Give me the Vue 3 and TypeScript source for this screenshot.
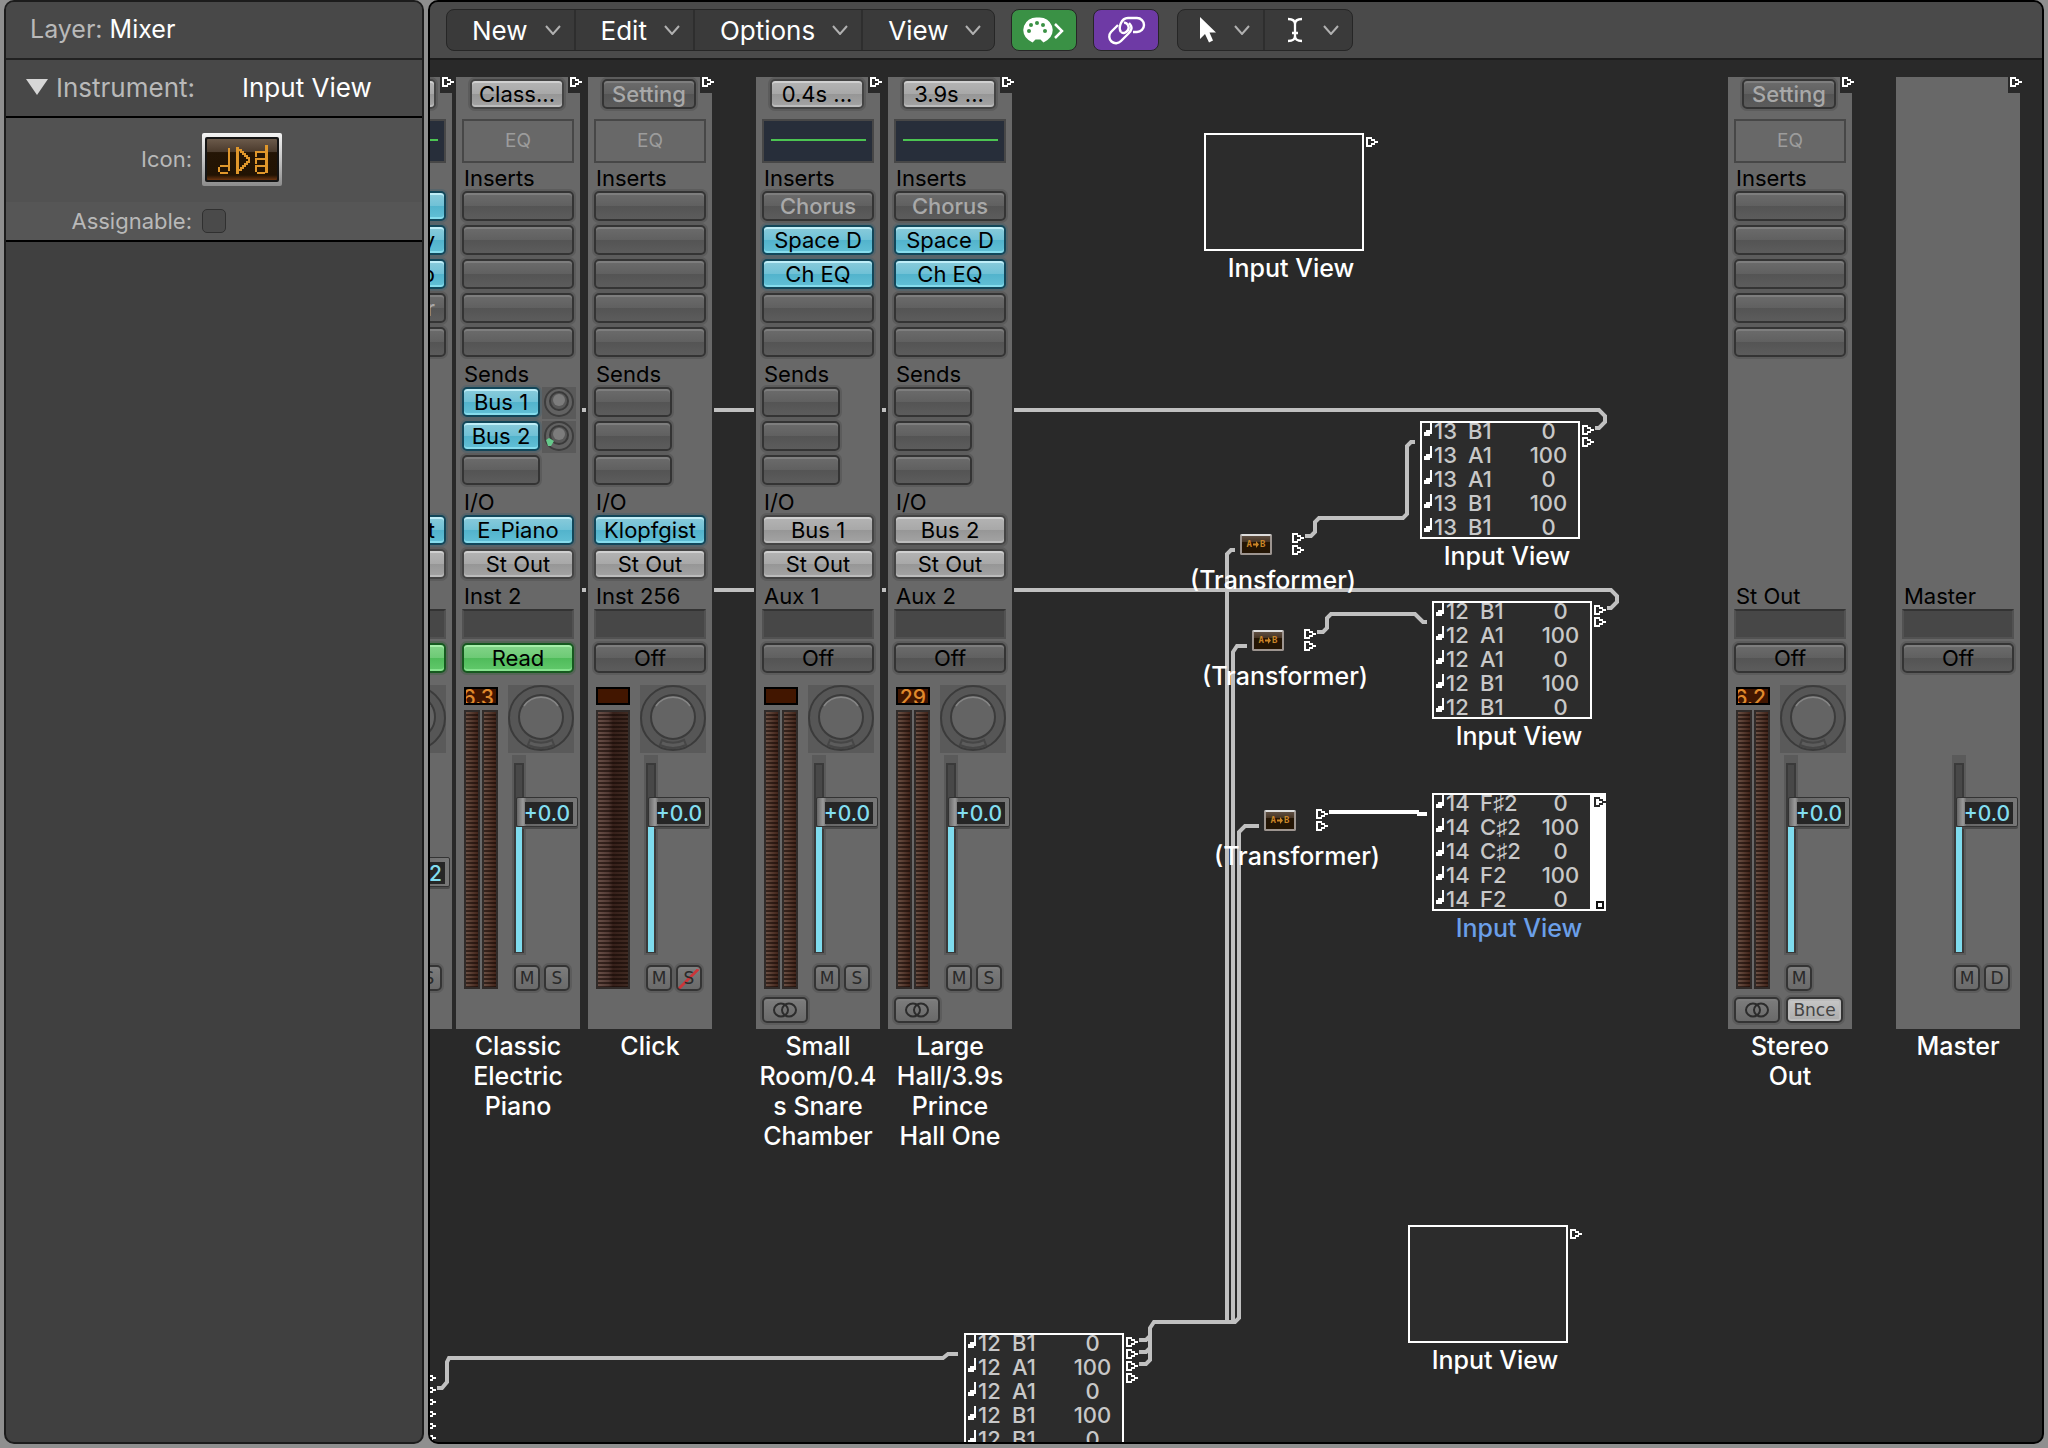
<script setup lang="ts">
import { ref } from 'vue'

type Tone = 'dark' | 'blue' | 'grey' | 'green'
interface Slot { text?: string; tone?: Tone; dim?: boolean }
interface Send { text?: string; tone?: Tone; knob?: 'off' | 'low' }
interface Strip {
  x: number
  label: string[]
  edge?: boolean
  setting?: Slot
  eq?: 'empty' | 'curve'
  inserts?: Slot[]
  sends?: Send[]
  io?: Slot[]
  channel?: string
  headings?: boolean
  mode: Slot
  peak?: string
  meter?: 1 | 2
  pan?: boolean
  level: string
  drop?: number
  keys: string[]
  soloSafe?: boolean
  link?: boolean
  bounce?: boolean
}
interface View { x: number; y: number; channel?: string; notes: [string, string][]; ports: number; selected?: boolean }

const assignable = ref(false)
const menus = ['New', 'Edit', 'Options', 'View']
const portShape = 'M0 0H6V2H9V4H12V6H9V8H6V10H0ZM2 2V8H5V6H8V4H5V2Z'

const five = (...s: Slot[]): Slot[] => [...s, ...Array.from({ length: 5 - s.length }, () => ({}))]
const room: Slot[] = five({ text: 'Chorus', dim: true }, { text: 'Space D', tone: 'blue' }, { text: 'Ch EQ', tone: 'blue' })

const strips: Strip[] = [
  {
    x: -102, label: [], edge: true, setting: { tone: 'grey' }, eq: 'curve',
    inserts: five({ tone: 'blue' }, { text: 'y', tone: 'blue' }, { text: 'p', tone: 'blue' }, { text: 'r', dim: true }),
    sends: [{}, {}, {}], io: [{ text: 't', tone: 'blue' }, { tone: 'grey' }],
    mode: { tone: 'green' }, meter: 2, pan: true, level: '2', drop: 60, keys: ['', 'S'],
  },
  {
    x: 26, label: ['Classic', 'Electric', 'Piano'], headings: true, setting: { text: 'Class...', tone: 'grey' }, eq: 'empty',
    inserts: five(), sends: [{ text: 'Bus 1', tone: 'blue', knob: 'off' }, { text: 'Bus 2', tone: 'blue', knob: 'low' }, {}],
    io: [{ text: 'E-Piano', tone: 'blue' }, { text: 'St Out', tone: 'grey' }], channel: 'Inst 2',
    mode: { text: 'Read', tone: 'green' }, peak: '6.3', meter: 2, pan: true, level: '+0.0', keys: ['M', 'S'],
  },
  {
    x: 158, label: ['Click'], headings: true, setting: { text: 'Setting', dim: true }, eq: 'empty',
    inserts: five(), sends: [{}, {}, {}],
    io: [{ text: 'Klopfgist', tone: 'blue' }, { text: 'St Out', tone: 'grey' }], channel: 'Inst 256',
    mode: { text: 'Off' }, peak: '', meter: 1, pan: true, level: '+0.0', keys: ['M', 'S'], soloSafe: true,
  },
  {
    x: 326, label: ['Small', 'Room/0.4', 's Snare', 'Chamber'], headings: true, setting: { text: '0.4s ...', tone: 'grey' }, eq: 'curve',
    inserts: room, sends: [{}, {}, {}],
    io: [{ text: 'Bus 1', tone: 'grey' }, { text: 'St Out', tone: 'grey' }], channel: 'Aux 1',
    mode: { text: 'Off' }, peak: '', meter: 2, pan: true, level: '+0.0', keys: ['M', 'S'], link: true,
  },
  {
    x: 458, label: ['Large', 'Hall/3.9s', 'Prince', 'Hall One'], headings: true, setting: { text: '3.9s ...', tone: 'grey' }, eq: 'curve',
    inserts: room, sends: [{}, {}, {}],
    io: [{ text: 'Bus 2', tone: 'grey' }, { text: 'St Out', tone: 'grey' }], channel: 'Aux 2',
    mode: { text: 'Off' }, peak: '29', meter: 2, pan: true, level: '+0.0', keys: ['M', 'S'], link: true,
  },
  {
    x: 1298, label: ['Stereo', 'Out'], headings: true, setting: { text: 'Setting', dim: true }, eq: 'empty',
    inserts: five(), channel: 'St Out',
    mode: { text: 'Off' }, peak: '6.2', meter: 2, pan: true, level: '+0.0', keys: ['M'], link: true, bounce: true,
  },
  { x: 1466, label: ['Master'], channel: 'Master', mode: { text: 'Off' }, level: '+0.0', keys: ['M', 'D'] },
]

const drums: [string, string][] = [['B1', '0'], ['A1', '100'], ['A1', '0'], ['B1', '100'], ['B1', '0']]
const views: View[] = [
  { x: 774, y: 73, notes: [], ports: 1 },
  { x: 990, y: 361, channel: '13', notes: drums, ports: 2 },
  { x: 1002, y: 541, channel: '12', notes: drums, ports: 2 },
  { x: 1002, y: 733, channel: '14', notes: [['F♯2', '0'], ['C♯2', '100'], ['C♯2', '0'], ['F2', '100'], ['F2', '0']], ports: 1, selected: true },
  { x: 978, y: 1165, notes: [], ports: 1 },
  { x: 534, y: 1273, channel: '12', notes: drums, ports: 4 },
]
const transformers = [{ x: 760, y: 473 }, { x: 772, y: 569 }, { x: 784, y: 749 }]

const cables = [
  'M150 350H1169L1175 356V362L1169 368H1165',
  'M150 530H1181L1187 536V542L1181 548H1177',
  'M875 476H881L885 472V462L889 458H973L977 454V386L981 382H985',
  'M887 572H893L897 568V558L901 554H985L993 562H997',
  'M805 490H801L797 494V1262',
  'M817 586H807L803 592V1262',
  'M829 766H815L809 772V1258L805 1262H724L720 1268V1300L716 1304H709M709 1280H716L720 1276M709 1292H716L720 1288',
  'M7 1328H12L17 1322V1302L19 1298H513L518 1294H528',
]
</script>

<template>
  <div class="app">
    <aside class="inspector">
      <header class="layer"><span class="muted">Layer:</span> Mixer</header>
      <div class="instrument">
        <svg class="disclosure" width="22" height="16" viewBox="0 0 22 16"><path d="M0 0H22L11 16Z" fill="#d6d6d6" /></svg>
        <span class="muted">Instrument:</span><span class="instrument-name">Input View</span>
      </div>
      <div class="field icon-field">
        <span class="field-label">Icon:</span>
        <button class="icon-well" aria-label="Choose icon">
          <svg width="80" height="53" viewBox="0 0 80 53">
            <defs>
              <linearGradient id="frame" x2="0" y2="1"><stop offset="0" stop-color="#f4f4f4" /><stop offset=".5" stop-color="#c4c4c4" /><stop offset="1" stop-color="#8c8c8c" /></linearGradient>
              <linearGradient id="glass" x2="0" y2="1"><stop offset="0" stop-color="#6b5a4b" /><stop offset=".32" stop-color="#4a3a2c" /><stop offset=".33" stop-color="#241505" /><stop offset=".88" stop-color="#221303" /><stop offset="1" stop-color="#6a3410" /></linearGradient>
            </defs>
            <rect width="80" height="53" rx="2" fill="url(#frame)" />
            <rect x="3" y="4" width="74" height="45" rx="2" fill="#141414" />
            <rect x="5" y="6" width="70" height="41" rx="1" fill="url(#glass)" />
            <g fill="none" stroke="#e0972b" stroke-width="2" shape-rendering="crispEdges">
              <path d="M27 15V38M18 33H26M17 34V39M18 40H26" stroke-width="2.4" />
              <path d="M35 14V41" stroke-width="3" />
              <path d="M37 17H39V19H41V21H43V23H45V25H47V29H45V31H43V33H41V35H39V37H37" />
              <path d="M64 12V40" stroke-width="3" />
              <path d="M63 19H54V24M63 26H54V31M63 33H54V39M55 40H63" />
            </g>
          </svg>
        </button>
      </div>
      <div class="field assign-field">
        <label class="field-label" for="assignable">Assignable:</label>
        <input id="assignable" v-model="assignable" type="checkbox" class="tick">
      </div>
    </aside>

    <main class="environment">
      <nav class="toolbar">
        <div class="group">
          <button v-for="m in menus" :key="m" class="menu">
            {{ m }}
            <svg width="16" height="10" viewBox="0 0 16 10"><path d="M1 1L8 9L15 1" class="chev" /></svg>
          </button>
        </div>
        <button class="toggle green" aria-label="MIDI In/Out">
          <svg width="64" height="40" viewBox="0 0 64 40">
            <path d="M24.500 7.500a13 12.500 0 0 0-8 22.500l4 2.500 3-3h5l3 3 4-2.500a13 12.500 0 0 0-8-22.500z" fill="#fff" />
            <g fill="#3a9145"><circle cx="17" cy="21" r="2" /><circle cx="19" cy="15" r="2" /><circle cx="25" cy="13" r="2" /><circle cx="31" cy="15" r="2" /><circle cx="33" cy="21" r="2" /></g>
            <path d="M43 14L50 21L43 28" fill="none" stroke="#fff" stroke-width="2.500" />
          </svg>
        </button>
        <button class="toggle purple" aria-label="Link">
          <svg width="64" height="40" viewBox="0 0 64 40" fill="none" stroke="#fff" stroke-width="2.400">
            <path d="M27 22C24 18 27 8 34 8H43A7 7 0 0 1 43 22H39" />
            <path d="M35 13C39 17 38 20 34 24L27 31A6.500 6.500 0 0 1 17 22L24 15" />
            <path d="M27 22C29 24 32 23 34 20C36 17 33 12 30 13" />
          </svg>
        </button>
        <div class="group tools">
          <button class="tool" aria-label="Pointer tool">
            <svg width="18" height="28" viewBox="0 0 18 28"><path d="M1 1V23L6 18L10 26.500L14 24.500L10.500 16.500H17Z" fill="#fff" /></svg>
            <svg width="16" height="10" viewBox="0 0 16 10"><path d="M1 1L8 9L15 1" class="chev" /></svg>
          </button>
          <button class="tool" aria-label="Text tool">
            <svg width="18" height="28" viewBox="0 0 18 28"><path d="M2 3C6 3 9 4 9 8V20C9 24 6 25 2 25M16 3C12 3 9 4 9 8M9 20C9 24 12 25 16 25M6 17H12" fill="none" stroke="#fff" stroke-width="2.300" /></svg>
            <svg width="16" height="10" viewBox="0 0 16 10"><path d="M1 1L8 9L15 1" class="chev" /></svg>
          </button>
        </div>
      </nav>

      <section class="canvas">
        <svg class="cables" width="100%" height="100%">
          <path v-for="c in cables" :key="c" :d="c" />
          <path class="live" d="M899 752H989M987 754H997" />
        </svg>

        <div v-for="s in strips" :key="s.x" class="object" :style="{ left: s.x + 'px', top: '17px' }">
          <article class="strip" :class="{ edge: s.edge }">
            <div class="notch">
              <svg class="port" width="12" height="11" viewBox="0 0 12 11"><path :d="portShape" /></svg>
            </div>
            <button v-if="s.setting" class="slot setting" :class="[s.setting.tone, { dim: s.setting.dim }]" aria-label="Setting">{{ s.setting.text }}</button>
            <button v-if="s.eq" class="eq" :class="s.eq" aria-label="EQ"><template v-if="s.eq === 'empty'">EQ</template></button>
            <template v-if="s.inserts">
              <h3 class="caption">{{ s.headings ? 'Inserts' : '' }}</h3>
              <div class="slots">
                <button v-for="(i, n) in s.inserts" :key="n" class="slot" :class="[i.tone, { dim: i.dim }]">{{ i.text }}</button>
              </div>
            </template>
            <template v-if="s.sends">
              <h3 class="caption spaced">{{ s.headings ? 'Sends' : '' }}</h3>
              <div class="slots">
                <div v-for="(d, n) in s.sends" :key="n" class="send">
                  <button class="slot" :class="d.tone">{{ d.text }}</button>
                  <svg v-if="d.knob" class="send-knob" width="34" height="32" viewBox="0 0 34 32">
                    <circle cx="17" cy="15" r="14" fill="#626262" stroke="#3d3d3d" stroke-width="2" />
                    <circle cx="17" cy="14" r="9" fill="#585858" stroke="#3a3a3a" stroke-width="2" />
                    <circle cx="17" cy="13" r="6" fill="#7c7c7c" />
                    <path v-if="d.knob === 'low'" d="M4 19L7 17L12 20L9 25L6 25Z" fill="#66c98b" />
                  </svg>
                </div>
              </div>
            </template>
            <template v-if="s.io">
              <h3 class="caption spaced">{{ s.headings ? 'I/O' : '' }}</h3>
              <div class="slots">
                <button v-for="(i, n) in s.io" :key="n" class="slot" :class="i.tone">{{ i.text }}</button>
              </div>
            </template>

            <div class="lower">
              <h3 class="caption spaced">{{ s.channel }}</h3>
              <div class="well"></div>
              <button class="slot" :class="s.mode.tone">{{ s.mode.text }}</button>
              <div class="mix">
                <div class="levels">
                  <template v-if="s.meter">
                    <div class="peak">{{ s.peak }}</div>
                    <div class="meters" :class="{ mono: s.meter === 1 }"><i v-for="b in s.meter" :key="b"></i></div>
                  </template>
                </div>
                <div class="controls">
                  <div class="pan">
                    <svg v-if="s.pan" width="66" height="68" viewBox="0 0 66 68">
                      <rect width="66" height="68" fill="#5a5a5a" />
                      <circle cx="33" cy="33" r="32" fill="#565656" stroke="#3b3b3b" stroke-width="2" />
                      <path d="M20 60A30 30 0 0 0 46 60L44 55A24 24 0 0 1 22 55Z" fill="#5c5c5c" stroke="#464646" stroke-width="2" />
                      <circle cx="33" cy="32" r="22" fill="#646464" stroke="#3b3b3b" stroke-width="2" />
                      <path d="M16 21A21 21 0 0 1 50 21" fill="none" stroke="#858585" stroke-width="1.500" />
                    </svg>
                  </div>
                  <div class="fader">
                    <div class="track"></div>
                    <div class="thumb-row" :style="{ paddingTop: 42 + (s.drop ?? 0) + 'px' }">
                      <div class="thumb"><output>{{ s.level }}</output></div>
                      <div class="fill"></div>
                    </div>
                    <input type="range" class="range" aria-label="Volume" min="-96" max="6" value="0">
                  </div>
                  <div class="keys">
                    <button v-for="(k, n) in s.keys" :key="n" class="slot key" :class="{ safe: s.soloSafe && k === 'S' }">{{ k }}</button>
                  </div>
                </div>
              </div>
              <div class="foot">
                <button v-if="s.link" class="slot key link" aria-label="Stereo">
                  <svg width="24" height="16" viewBox="0 0 24 16" fill="none" stroke="#2c2c2c" stroke-width="2"><ellipse cx="8" cy="8" rx="7" ry="6.500" /><ellipse cx="16" cy="8" rx="7" ry="6.500" /></svg>
                </button>
                <button v-if="s.bounce" class="slot key bounce">Bnce</button>
              </div>
            </div>
          </article>
          <p v-if="s.label.length" class="object-name"><span v-for="l in s.label" :key="l">{{ l }}</span></p>
        </div>

        <div v-for="t in transformers" :key="t.y" class="object transformer" :style="{ left: t.x + 'px', top: t.y + 'px' }">
          <div class="transformer-body">
            <div class="chip">
              <span>A</span><svg width="6" height="7" viewBox="0 0 6 7"><path d="M0 2.500H3V0L6 3.500L3 7V4.500H0Z" fill="#c98426" /></svg><span>B</span>
            </div>
            <div class="ports">
              <svg v-for="p in 2" :key="p" class="port" width="12" height="11" viewBox="0 0 12 11"><path :d="portShape" /></svg>
            </div>
          </div>
          <p class="object-name">(Transformer)</p>
        </div>

        <div v-for="(v, i) in views" :key="i" class="object view" :class="{ selected: v.selected }" :style="{ left: v.x + 'px', top: v.y + 'px' }">
          <div class="view-body">
            <div class="monitor">
              <table v-if="v.notes.length" aria-label="Incoming events">
                <tbody>
                  <tr v-for="(n, r) in v.notes" :key="r">
                    <td class="glyph"><svg width="8" height="14" viewBox="0 0 8 14" fill="#fff" shape-rendering="crispEdges"><path d="M6 0H8V12H6V14H0V10H2V8H6Z" /></svg></td>
                    <td class="chan">{{ v.channel }}</td>
                    <td class="pitch">{{ n[0] }}</td>
                    <td class="velocity">{{ n[1] }}</td>
                  </tr>
                </tbody>
              </table>
            </div>
            <div class="ports">
              <svg v-for="p in v.ports" :key="p" class="port" width="12" height="11" viewBox="0 0 12 11"><path :d="portShape" /></svg>
              <i v-if="v.selected" class="resize"></i>
            </div>
          </div>
          <p class="object-name">Input View</p>
        </div>

        <div class="edge-ports ports">
          <svg v-for="p in 6" :key="p" class="port" width="12" height="11" viewBox="0 0 12 11"><path :d="portShape" /></svg>
        </div>
      </section>
    </main>
  </div>
</template>

<style>
body { margin: 0; background: #8f8f8f; }
</style>

<style scoped>
* { box-sizing: border-box; }
.app { display: flex; gap: 4px; height: 100vh; padding: 0 4px 4px; background: #8f8f8f; font-family: Inter, "Noto Sans", sans-serif; font-size: 25px; color: #fff; }
button { font: inherit; color: inherit; padding: 0; margin: 0; border: 0; background: none; }
h3, p { margin: 0; font-weight: 400; }
svg { display: block; flex: none; }
.muted { color: #b9b9b9; }

.inspector { flex: none; width: 420px; border: 2px solid #1c1c1c; border-radius: 10px; background: #404040; overflow: hidden; }
.layer { height: 58px; padding-left: 24px; line-height: 54px; background: #484848; border-bottom: 2px solid #212121; }
.instrument { display: flex; align-items: center; height: 58px; padding: 0 0 2px 20px; background: #484848; border-bottom: 2px solid #000; font-size: 26px; }
.disclosure { margin-right: 8px; }
.instrument-name { margin-left: auto; width: 180px; }
.field { display: grid; grid-template-columns: 186px 1fr; column-gap: 10px; align-items: center; font-size: 22px; color: #b9b9b9; }
.field-label { text-align: right; }
.icon-field { height: 84px; padding-bottom: 2px; background: #525252; }
.assign-field { height: 40px; background: #565656; border-bottom: 2px solid #000; }
.tick { appearance: none; width: 24px; height: 24px; margin: 0; border: 1px solid #303030; border-radius: 5px; background: #4a4a4a; }
.tick:checked { background: #68c; }
.icon-well { width: 80px; }

.environment { flex: 1; min-width: 0; display: flex; flex-direction: column; border: 2px solid #000; border-radius: 10px; background: #292929; overflow: hidden; }
.toolbar { flex: none; display: flex; align-items: center; height: 58px; padding: 0 16px; background: #4a4a4a; border-bottom: 2px solid #1c1c1c; font-size: 26px; }
.group { display: flex; height: 42px; border: 1px solid #262626; border-radius: 8px; background: #3a3a3a; overflow: hidden; }
.menu { display: flex; align-items: center; gap: 17px; padding: 0 13px 0 25px; border-right: 2px solid #2e2e2e; }
.menu:last-child, .tool:last-child { border-right: 0; }
.chev { fill: none; stroke: #b0b0b0; stroke-width: 2; }
.toggle { width: 66px; height: 42px; border: 1px solid #262626; border-radius: 8px; }
.toggle.green { margin-left: 16px; background: #3a9145; }
.toggle.purple { margin-left: 16px; background: #6e3aa5; }
.tools { margin-left: 18px; }
.tool { display: flex; align-items: center; justify-content: space-between; width: 87px; padding: 0 13px 0 21px; border-right: 2px solid #2e2e2e; }

.canvas { position: relative; flex: 1; min-height: 0; overflow: hidden; }
.cables { position: absolute; inset: 0; fill: none; stroke: #c0c0c0; stroke-width: 4; }
.cables .live { stroke: #fff; }
.object { position: absolute; }
.object-name { margin-top: 2px; font-weight: 500; line-height: 30px; text-align: center; }
.object-name span { display: block; white-space: nowrap; }
.port { fill: #fff; fill-rule: evenodd; shape-rendering: crispEdges; }

.strip { position: relative; display: flex; flex-direction: column; width: 124px; height: 952px; padding: 2px 6px 6px; background: #686868; box-shadow: 0 0 0 2px #292929; font-size: 22px; color: #000; }
.object > .strip + .object-name { margin: 2px -10px 0; }
.notch { position: absolute; top: 0; right: -2px; width: 14px; height: 16px; padding-left: 2px; background: #292929; }
.slot { display: block; flex: none; width: 100%; height: 30px; line-height: 26px; border: 2px solid #343434; border-radius: 5px; background: linear-gradient(#6c6c6c, #606060 50%, #545454 50%, #5c5c5c); box-shadow: 0 0 0 2px #5c5c5c, inset 0 2px #7e7e7e; white-space: nowrap; overflow: hidden; }
.slot.blue { border-color: #12475a; background: linear-gradient(#8acbdb, #6fc1d6 50%, #52b3cc 50%, #62c0d6); box-shadow: 0 0 0 2px #57646a, inset 0 2px #bfeef8, inset 0 -2px #86dcec; }
.slot.grey { border-color: #444; background: linear-gradient(#b4b4b4, #a8a8a8 50%, #969696 50%, #a4a4a4); box-shadow: 0 0 0 2px #5c5c5c, inset 0 2px #d0d0d0, inset 0 -2px #bcbcbc; }
.slot.green { border-color: #16591f; background: linear-gradient(#83d489, #6dca75 50%, #4fbb5a 50%, #62c96c); box-shadow: 0 0 0 2px #566457, inset 0 2px #a6f0aa, inset 0 -2px #86e28e; }
.slot.dim { color: #a9a9a9; font-weight: 500; }
.slot.setting { width: 94px; margin-left: 8px; }
.eq { height: 44px; margin-top: 10px; padding: 0; border: 2px solid #474747; font-size: 19px; color: #9c9c9c; line-height: 40px; }
.eq.curve { background: linear-gradient(#4cc452, #4cc452) 7px 18px / 95px 2px no-repeat #272e3a; }
.caption { height: 28px; padding-left: 2px; font-size: 22px; line-height: 30px; white-space: nowrap; }
.spaced { margin-top: 2px; }
.slots { display: flex; flex-direction: column; gap: 4px; }
.send { display: flex; height: 30px; }
.send .slot { width: 78px; }
.send-knob { margin-left: 2px; background: #5a5a5a; }
.edge .slot { text-align: right; padding-right: 9px; }

.lower { margin-top: auto; }
.well { height: 30px; margin-bottom: 4px; border: 2px solid #525252; border-top-color: #333; background: #474747; }
.mix { display: flex; margin-top: 12px; }
.levels { width: 46px; padding: 2px 0 0 2px; }
.peak { display: flex; justify-content: flex-end; width: 34px; height: 18px; padding-right: 2px; border: 2px solid #000; background: #421600; color: #e08a2c; font-size: 21px; font-weight: 500; line-height: 18px; overflow: hidden; }
.meters { display: flex; gap: 2px; width: 34px; height: 279px; margin-top: 5px; }
.meters i { flex: 1; border: 2px solid #302b29; background: repeating-linear-gradient(transparent 0 2px, rgba(20, 8, 4, .6) 2px 4px), linear-gradient(90deg, #6a5044, #42241a); }
.mono i { background: repeating-linear-gradient(transparent 0 2px, rgba(20, 8, 4, .6) 2px 4px), linear-gradient(90deg, #6a5048, #523a34 35%, #36201a 50%, #402a22); }
.controls { width: 66px; }
.pan { height: 70px; }
.fader { position: relative; width: 66px; height: 202px; padding: 8px 0 4px 6px; }
.track { width: 10px; height: 190px; border: 2px solid #3a3a3a; background: #484848; box-shadow: 0 0 0 2px #5a5a5a, 0 -6px 0 2px #5a5a5a; }
.thumb-row { position: absolute; top: 0; left: 8px; display: flex; flex-direction: column; height: 197px; }
.thumb { width: 62px; height: 30px; padding: 4px 4px 4px 8px; border: 1px solid #333; border-radius: 2px; background: linear-gradient(90deg, #666, #9a9a9a 10%, #666 16%, #777); box-shadow: 0 2px #4c4c4c; }
.thumb output { display: flex; justify-content: flex-end; height: 22px; padding-right: 3px; background: #262626; color: #82def0; font-size: 21px; font-weight: 500; line-height: 24px; }
.fill { flex: 1; width: 6px; background: #7fdcee; }
.range { position: absolute; inset: 0; width: 66px; height: 202px; margin: 0; opacity: 0; writing-mode: vertical-lr; direction: rtl; }
.keys { display: flex; gap: 4px; height: 26px; margin: 8px 0 0 6px; }
.key { width: 26px; height: 26px; padding: 0; line-height: 22px; font-family: "DejaVu Sans", sans-serif; font-size: 17px; color: #2a2a2a; background: linear-gradient(#7c7c7c, #6a6a6a); }
.edge .key { padding: 0; text-align: center; }
.safe { background: linear-gradient(135deg, transparent 47%, #c8383c 47% 55%, transparent 55%), linear-gradient(#7c7c7c, #6a6a6a); }
.foot { display: flex; gap: 6px; height: 26px; margin-top: 6px; }
.link { display: flex; align-items: center; justify-content: center; width: 46px; }
.bounce { width: 57px; color: #444; background: linear-gradient(#c8c8c8, #aaa); box-shadow: 0 0 0 2px #5c5c5c, inset 0 0 0 2px #bcbcbc; }

.ports { display: flex; flex-direction: column; gap: 1px; }
.transformer { width: 164px; }
.transformer-body { display: flex; gap: 20px; padding-left: 50px; }
.chip { display: flex; align-items: center; justify-content: center; gap: 1px; width: 32px; height: 21px; margin-top: 1px; border: 2px solid #9d9590; border-top-color: #ddd; border-radius: 2px; background: linear-gradient(#5f4f42, #453424 35%, #241504 36%); color: #c98426; font: bold 9px/13px "DejaVu Sans Mono", monospace; }
.transformer .object-name { margin-top: 9px; }
.view { width: 174px; }
.view-body { display: flex; }
.monitor { width: 160px; height: 118px; border: 2px solid #fff; background: #2c2c2c; overflow: hidden; }
.view .ports { width: 14px; padding: 4px 0 0 2px; }
.view table { margin-top: -4px; border-collapse: collapse; table-layout: fixed; width: 156px; color: #c8c8c8; font-size: 22px; font-weight: 500; line-height: 24px; }
.view td { height: 24px; padding: 0; white-space: nowrap; vertical-align: top; }
.view .glyph { width: 12px; padding-left: 2px; }
.view .glyph svg { margin-top: 3px; }
.view .chan { width: 34px; }
.view .pitch { width: 56px; }
.view .velocity { width: 54px; padding-right: 5px; text-align: center; }
.selected .monitor { border-right: 0; width: 158px; }
.selected .ports { position: relative; width: 16px; padding-left: 4px; background: #fff; }
.selected .port { fill: #292929; }
.resize { position: absolute; right: 2px; bottom: 2px; width: 8px; height: 8px; border: 2px solid #111; }
.selected .object-name { color: #6b9fe8; }
.edge-ports { position: absolute; left: -6px; top: 1313px; }
</style>
